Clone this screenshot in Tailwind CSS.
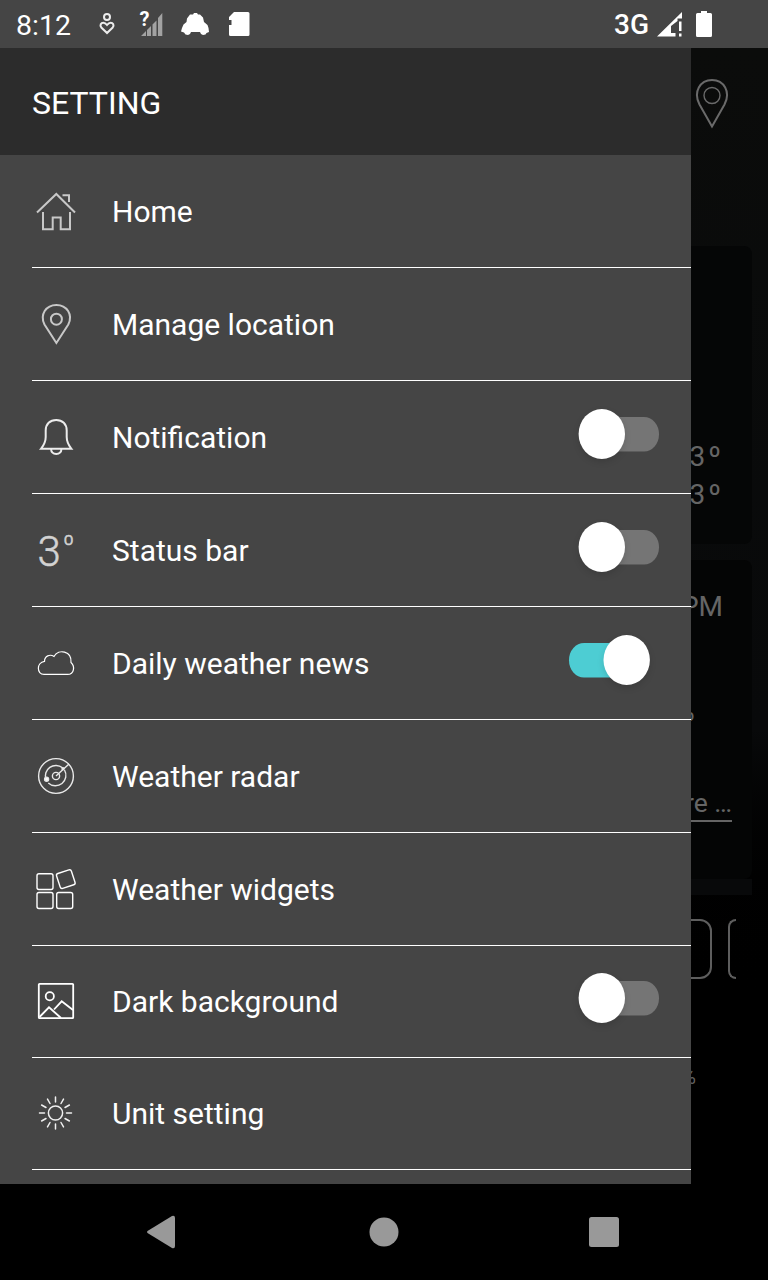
<!DOCTYPE html>
<html lang="en">
<head>
<meta charset="utf-8">
<title>Setting</title>
<script src="https://cdn.jsdelivr.net/npm/@tailwindcss/browser@4"></script>
</head>
<body class="bg-black font-['Roboto',sans-serif] text-white">
<div class="flex h-[1280px] w-[768px] flex-col overflow-hidden">

  <!-- Status bar -->
  <header class="flex h-12 shrink-0 items-center bg-[#454545] pl-4">
    <span class="w-[66px] pt-1 text-[28.500px] leading-none">8:12</span>
    <svg class="h-12 w-[186px]" viewBox="82 0 186 48" fill="none">
      <g stroke="#ececec" stroke-width="2">
        <circle cx="107" cy="17" r="3"/>
        <path d="M107 33 101.300 27.500C99.500 25 101 22.800 103.300 22.800 105 22.800 106.200 24 107 25 107.800 24 109 22.800 110.700 22.800 113 22.800 114.500 25 112.700 27.500Z"/>
      </g>
      <path fill="#a2a2a2" d="M141 36 146 31V36ZM147 30 151 26V36H147ZM152.500 24.500 156.500 20.500V36H152.500ZM158 18 162.300 13V36H158Z"/>
      <text x="139.500" y="26" font-size="20" font-weight="700" fill="#fff">?</text>
      <path fill="#fff" d="M190 14.500H193L194 13H197L198 14.500H200L203 17.500 204 22 207.500 25 208.500 28 209 32 206.500 33 205.500 34.500 203 35 201 34 200 32H191L190 34 188 35 185.500 34.500 184 32.500 181 31.500 182 28 183.500 24.500 186.500 22 187 18.500Z"/>
      <path fill="#fff" d="M234 12H248Q249.500 12 249.500 13.500V34.500Q249.500 36 248 36H230.500Q229 36 229 34.500V25H231.500V20H229V17Z"/>
    </svg>
    <span class="mr-px ml-auto pt-0.5 text-[28px] leading-none font-medium">3G</span>
    <svg class="h-12 w-[118px]" viewBox="650 0 118 48" fill="#fff">
      <path d="M657 36.500 682 12V18.500H677.500V21L671 26V33H675.500V36.500ZM679 21.500H681.500V31H679ZM679 33.500H681.500V36.500H679Z"/>
      <path d="M701 11H707V13H710.500Q712 13 712 14.500V35.500Q712 37 710.500 37H697.500Q696 37 696 35.500V14.500Q696 13 697.500 13H701Z"/>
    </svg>
  </header>

  <main class="flex h-[1136px] shrink-0">
    <!-- Drawer -->
    <aside class="flex w-[691px] shrink-0 flex-col bg-[#454545]">
      <h1 class="flex h-[107px] shrink-0 items-center bg-[#2c2c2c] pt-[3px] pl-8 text-[32px]">SETTING</h1>
      <ul class="flex flex-col pl-8 text-[30px] leading-none">
        <li class="flex h-[113px] items-center gap-8 border-b border-white">
          <svg class="size-12" viewBox="32 187 48 48" fill="none" stroke="#c8c8c8" stroke-width="2"><path d="M37 212.500 56.300 194 75 212.500M62.500 195.300H69V202M43 212V229.200H52.700V217.500H60.700V229.200H70V212"/></svg>
          <span class="pt-0.5">Home</span>
        </li>
        <li class="flex h-[113px] items-center gap-8 border-b border-white">
          <svg class="size-12" viewBox="32 300 48 48" fill="none" stroke="#c8c8c8" stroke-width="2"><path d="M56.400 343 44.500 324.500C39.500 314.500 46 304.900 56.400 304.900S73.300 314.500 68.300 324.500Z"/><circle cx="56.400" cy="319.200" r="5.500"/></svg>
          <span class="pt-0.5">Manage location</span>
        </li>
        <li class="flex h-[113px] items-center gap-8 border-b border-white">
          <svg class="size-12" viewBox="32 413 48 48" fill="none" stroke="#ececec" stroke-width="2"><path d="M41 448.800C44 445 45.700 441 45.700 437V430.500C45.700 424 50 420 56.200 420S66.700 424 66.700 430.500V437C66.700 441 68.400 445 71.400 448.800ZM51 449C51.500 455.500 61 455.500 61.500 449"/></svg>
          <span class="pt-0.5">Notification</span>
          <svg class="mr-[29px] ml-auto h-[60px] w-24 overflow-visible" viewBox="566 407 96 60"><rect x="581" y="417" width="78" height="34.500" rx="15" ry="17.250" fill="#757575"/><ellipse class="drop-shadow-md" cx="601.800" cy="434" rx="23.200" ry="25" fill="#fff"/></svg>
        </li>
        <li class="flex h-[113px] items-center gap-8 border-b border-white">
          <svg class="size-12" viewBox="32 526 48 48" fill="#d2d2d2" stroke="#d2d2d2" stroke-width=".5"><text x="37.500" y="565.500" font-size="42" font-weight="300">3</text><text x="63" y="552.500" font-size="25" font-weight="300">º</text></svg>
          <span class="pt-0.5">Status bar</span>
          <svg class="mr-[29px] ml-auto h-[60px] w-24 overflow-visible" viewBox="566 407 96 60"><rect x="581" y="417" width="78" height="34.500" rx="15" ry="17.250" fill="#757575"/><ellipse class="drop-shadow-md" cx="601.800" cy="434" rx="23.200" ry="25" fill="#fff"/></svg>
        </li>
        <li class="flex h-[113px] items-center gap-8 border-b border-white">
          <svg class="size-12" viewBox="32 639 48 48" fill="none" stroke="#fff" stroke-width="1.200"><path d="M44 674.400C36.500 674.400 36.300 662.500 44.500 661.400 44.500 656 50 653.700 54 656.500 58.500 648.500 72 650.800 71 662.500 75 666 74.500 674.400 67.500 674.400Z"/></svg>
          <span class="pt-0.5">Daily weather news</span>
          <svg class="mr-[29px] ml-auto h-[60px] w-24 overflow-visible" viewBox="566 633 96 60"><rect x="569" y="643" width="78" height="34.500" rx="15" ry="17.250" fill="#4dcdd3"/><ellipse class="drop-shadow-md" cx="626.700" cy="660" rx="23.200" ry="25" fill="#fff"/></svg>
        </li>
        <li class="flex h-[113px] items-center gap-8 border-b border-white">
          <svg class="size-12" viewBox="32 752 48 48" fill="none" stroke="#e8e8e8" stroke-width="1.400"><circle cx="56" cy="776" r="17.400"/><path d="M62.500 767.800A10.500 10.500 0 0 0 46 779.500M48.300 783A10.500 10.500 0 0 0 64.500 770M56 776 69 764"/><circle cx="56" cy="776" r="3.600"/><circle cx="46.600" cy="779.300" r="2" fill="#fff"/><circle cx="63" cy="768.800" r="1" fill="#fff"/></svg>
          <span class="pt-0.5">Weather radar</span>
        </li>
        <li class="flex h-[113px] items-center gap-8 border-b border-white">
          <svg class="size-12" viewBox="32 865 48 48" fill="none" stroke="#fff" stroke-width="1.400"><rect x="37" y="873.700" width="16" height="15.800" rx="2"/><rect x="37" y="892.500" width="16" height="16" rx="2"/><rect x="56.700" y="892.500" width="16" height="16" rx="2"/><rect x="58" y="871.300" width="15.600" height="15.600" rx="2" transform="rotate(-18 65.800 879.100)"/></svg>
          <span class="pt-0.5">Weather widgets</span>
        </li>
        <li class="flex h-[112px] items-center gap-8 border-b border-white">
          <svg class="size-12" viewBox="32 978 48 48" fill="none" stroke="#fff" stroke-width="1.800"><rect x="38.800" y="983.800" width="34.400" height="34.400" rx=".8"/><circle cx="49.800" cy="996.200" r="4.100"/><path d="M39.500 1017 49 1007.300 61 1018M54 1009.500 61.700 1001.300 73 1010"/></svg>
          <span>Dark background</span>
          <svg class="mr-[29px] ml-auto h-[60px] w-24 overflow-visible" viewBox="566 408 96 60"><rect x="581" y="417" width="78" height="34.500" rx="15" ry="17.250" fill="#757575"/><ellipse class="drop-shadow-md" cx="601.800" cy="434" rx="23.200" ry="25" fill="#fff"/></svg>
        </li>
        <li class="flex h-[112px] items-center gap-8 border-b border-white">
          <svg class="size-12" viewBox="-23.500 -23 48 48" fill="none" stroke="#f0f0f0" stroke-width="1.500" stroke-linecap="round"><circle r="7.100"/><path d="M0-11V-16M0 11V16M-11 0H-16M11 0H16M5.500-9.500 8-13.900M9.500-5.500 13.900-8M9.500 5.500 13.900 8M5.500 9.500 8 13.900M-5.500 9.500-8 13.900M-9.500 5.500-13.900 8M-9.500-5.500-13.900-8M-5.500-9.500-8-13.900"/></svg>
          <span>Unit setting</span>
        </li>
      </ul>
    </aside>

    <!-- Dimmed weather page behind the drawer -->
    <section class="flex w-[77px] flex-col overflow-hidden bg-linear-to-b from-[#0b0c0b] via-[#08090a] via-60% to-black to-85% text-[#656565]">
      <div class="flex h-[198px] shrink-0 pt-[31px] pl-1">
        <svg class="h-[50px] w-[34px]" viewBox="695 79 34 50" fill="none" stroke="#6a6a6a" stroke-width="2"><path d="M712 126.500 699.500 104.500C693 92 700 80 712 80S731 92 724.500 104.500Z"/><circle cx="712" cy="95.500" r="8" stroke-width="1.400"/></svg>
      </div>
      <div class="mr-4 flex h-[298px] shrink-0 flex-col items-end rounded-tr-lg rounded-br-lg bg-[#050606] pt-[192px] pr-[31px] text-[28px] leading-[38px]">
        <span class="flex gap-[3px] whitespace-nowrap"><span>3</span><span>º</span></span>
        <span class="flex gap-[3px] whitespace-nowrap"><span>3</span><span>º</span></span>
      </div>
      <div class="mt-4 mr-4 flex h-[319px] shrink-0 flex-col items-end rounded-tr-lg rounded-br-lg bg-[#040505] pt-[31px] pr-5">
        <span class="mr-[9px] text-[28px] leading-8">PM</span>
        <span class="mt-[82px] mr-[37px] text-[24px] leading-8">º</span>
        <span class="mt-[50px] flex h-[35px] items-start border-b-2 border-[#656565] text-[26.500px] leading-8 whitespace-nowrap">More …</span>
      </div>
      <div class="mr-4 h-4 shrink-0 bg-[#08090a]"></div>
      <div class="mt-6 mr-8 flex h-[60px] shrink-0 justify-end gap-4 overflow-hidden">
        <div class="w-[60px] shrink-0 rounded-xl border-2 border-[#5e5e5e]"></div>
        <div class="w-2 shrink-0 rounded-l-xl border-2 border-r-0 border-[#5e5e5e]"></div>
      </div>
      <span class="mt-[86px] mr-[72px] flex shrink-0 justify-end text-[20px] leading-6">%</span>
    </section>
  </main>

  <!-- System navigation -->
  <nav class="flex h-24 shrink-0 items-center bg-black">
    <svg class="h-24 w-[768px]" viewBox="0 1184 768 96" fill="#999"><path d="M147.500 1231Q146.500 1232 147.500 1233L172 1248Q175 1249 175 1246V1218Q175 1215 172 1216Z"/><circle cx="384" cy="1232" r="14.500"/><rect x="589" y="1217" width="30" height="30" rx="2.500"/></svg>
  </nav>
</div>
</body>
</html>
